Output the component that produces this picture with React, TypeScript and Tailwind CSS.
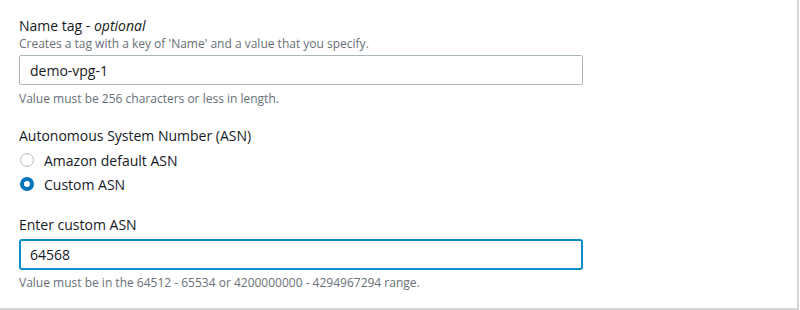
import { useState } from "react";

const font = { fontFamily: '"Open Sans", "Noto Sans", sans-serif' };

function Radio({ checked, label, onClick }: { checked: boolean; label: string; onClick: () => void }) {
  return (
    <label className="flex items-center gap-[10px] h-6 cursor-pointer" onClick={onClick}>
      {checked ? (
        <span className="w-[14px] h-[14px] rounded-full border-[4px] border-[#0073bb] bg-white box-border" />
      ) : (
        <span className="w-[14px] h-[14px] rounded-full border-[1.5px] border-[#b6bec0] bg-white box-border" />
      )}
      <span className="text-[14px] text-[#16191f]">{label}</span>
    </label>
  );
}

export default function App() {
  const [asn, setAsn] = useState<"amazon" | "custom">("custom");

  return (
    <div className="w-[800px] h-[310px] bg-white" style={font}>
      <div className="w-[799px] h-[310px] border-r-2 border-b-2 border-[#d5d5d5] pl-[19px] pt-[16px] box-border">
        {/* Name tag */}
        <div className="text-[14px] leading-[20px] text-[#16191f]">
          Name tag - <i>optional</i>
        </div>
        <div className="text-[12px] leading-[16px] text-[#687078]">
          Creates a tag with a key of 'Name' and a value that you specify.
        </div>
        <input
          defaultValue="demo-vpg-1"
          className="mt-[3px] w-[564px] h-[30px] border border-[#aab7b8] rounded-[2px] px-[10px] text-[14px] text-[#16191f] outline-none"
          style={font}
        />
        <div className="mt-[6px] text-[12px] leading-[16px] text-[#687078]">
          Value must be 256 characters or less in length.
        </div>

        {/* ASN */}
        <div className="mt-[19px] text-[14px] leading-[20px] text-[#16191f]">
          Autonomous System Number (ASN)
        </div>
        <div className="mt-[2px] pl-[1px]">
          <Radio checked={asn === "amazon"} label="Amazon default ASN" onClick={() => setAsn("amazon")} />
          <Radio checked={asn === "custom"} label="Custom ASN" onClick={() => setAsn("custom")} />
        </div>

        <div className="mt-[19px] text-[14px] leading-[20px] text-[#16191f]">Enter custom ASN</div>
        <input
          defaultValue="64568"
          className="mt-[4px] w-[564px] h-[31px] border-2 border-[#0a8ec9] rounded-[3px] px-[9px] text-[14px] text-[#16191f] outline-none"
          style={font}
        />
        <div className="mt-[5px] text-[12px] leading-[16px] text-[#687078]">
          Value must be in the 64512 - 65534 or 4200000000 - 4294967294 range.
        </div>
      </div>
    </div>
  );
}
